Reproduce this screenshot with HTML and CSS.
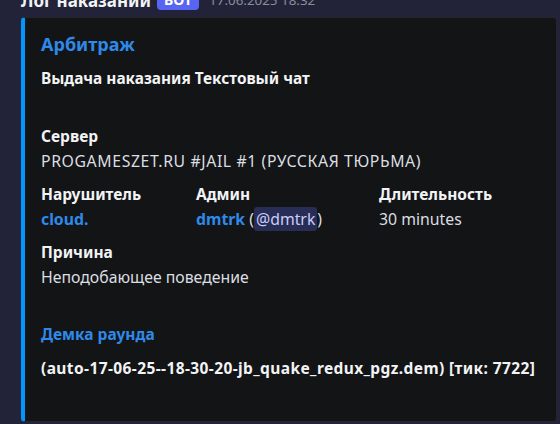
FILE: index.html
```html
<!DOCTYPE html>
<html lang="ru">
<head>
  <meta charset="UTF-8">
  <title>Лог наказаний</title>
  <link rel="stylesheet" href="styles.css">
</head>
<body>
  <div class="message">
    <div class="header">
      <span class="author">Лог наказаний</span>
      <span class="bot">BOT</span>
      <span class="time">17.06.2025 18:32</span>
    </div>

    <!-- Embed -->
    <article class="embed">
      <div class="embed-title">Арбитраж</div>
      <div class="embed-desc"><strong>Выдача наказания Текстовый чат</strong><br>&nbsp;</div>

      <div class="fields">
        <div class="field full">
          <div class="field-name">Сервер</div>
          <div class="field-value caps">PROGAMESZET.RU #JAIL #1 (РУССКАЯ ТЮРЬМА)</div>
        </div>

        <div class="field">
          <div class="field-name">Нарушитель</div>
          <div class="field-value"><a class="link">cloud.</a></div>
        </div>
        <div class="field">
          <div class="field-name">Админ</div>
          <div class="field-value"><a class="link">dmtrk</a> (<span class="mention">@dmtrk</span>)</div>
        </div>
        <div class="field">
          <div class="field-name">Длительность</div>
          <div class="field-value">30 minutes</div>
        </div>

        <div class="field full">
          <div class="field-name">Причина</div>
          <div class="field-value">Неподобающее поведение</div>
        </div>

        <div class="field full demo">
          <div class="field-name"><a class="link">Демка раунда</a></div>
          <div class="field-value"><strong>(auto-17-06-25--18-30-20-jb_quake_redux_pgz.dem) [тик: 7722]</strong></div>
        </div>
      </div>
    </article>
  </div>
</body>
</html>
```

FILE: styles.css
```css
body {
  margin: 0;
  background: #222339;
  font-family: 'Noto Sans', sans-serif;
  color: #dbdee1;
  overflow: hidden;
}

.message {
  padding: 0 3px 0 21px;
  margin-top: -12px;
}

.header {
  display: flex;
  align-items: center;
  height: 24px;
  margin-bottom: 5px;
}

.author {
  font-size: 17px;
  font-weight: 700;
  color: #f2f3f5;
}

.bot {
  margin-left: 6px;
  padding: 0 7px;
  height: 20px;
  line-height: 20px;
  border-radius: 4px;
  background: #5865f2;
  color: #ffffff;
  font-size: 14px;
  font-weight: 700;
}

.time {
  margin-left: 10px;
  font-size: 13.4px;
  color: #8a8d99;
}

.embed {
  box-sizing: border-box;
  width: 536px;
  height: 405px;
  background: #131416;
  border: 1px solid #25262c;
  border-left: 4px solid #0095ff;
  border-radius: 4px;
  padding: 14px 16px 16px 16px;
}

.embed-title {
  font-size: 18px;
  line-height: 24px;
  font-weight: 700;
  color: #2f89e8;
}

.embed-desc {
  margin-top: 10px;
  font-size: 15.4px;
  line-height: 25px;
  color: #f2f3f5;
}

.fields {
  display: grid;
  grid-template-columns: 147px 175px 1fr;
  column-gap: 8px;
  row-gap: 8px;
  margin-top: 8px;
}

.field.full {
  grid-column: 1 / -1;
}

.field-name {
  font-size: 15.5px;
  line-height: 25px;
  font-weight: 700;
  color: #f2f3f5;
}

.field-value {
  font-size: 15.8px;
  line-height: 25px;
  color: #dbdee1;
}

.field-value.caps {
  letter-spacing: 0.6px;
}

.field-value strong {
  font-size: 15.5px;
  letter-spacing: 0.4px;
  color: #f2f3f5;
}

.demo {
  margin-top: 24px;
}

.demo .field-value {
  margin-top: 9px;
}

.link {
  color: #2f89e8;
  font-weight: 700;
}

.mention {
  padding: 1px 2px;
  border-radius: 3px;
  background: #272d55;
  color: #c9cdfb;
}
```
